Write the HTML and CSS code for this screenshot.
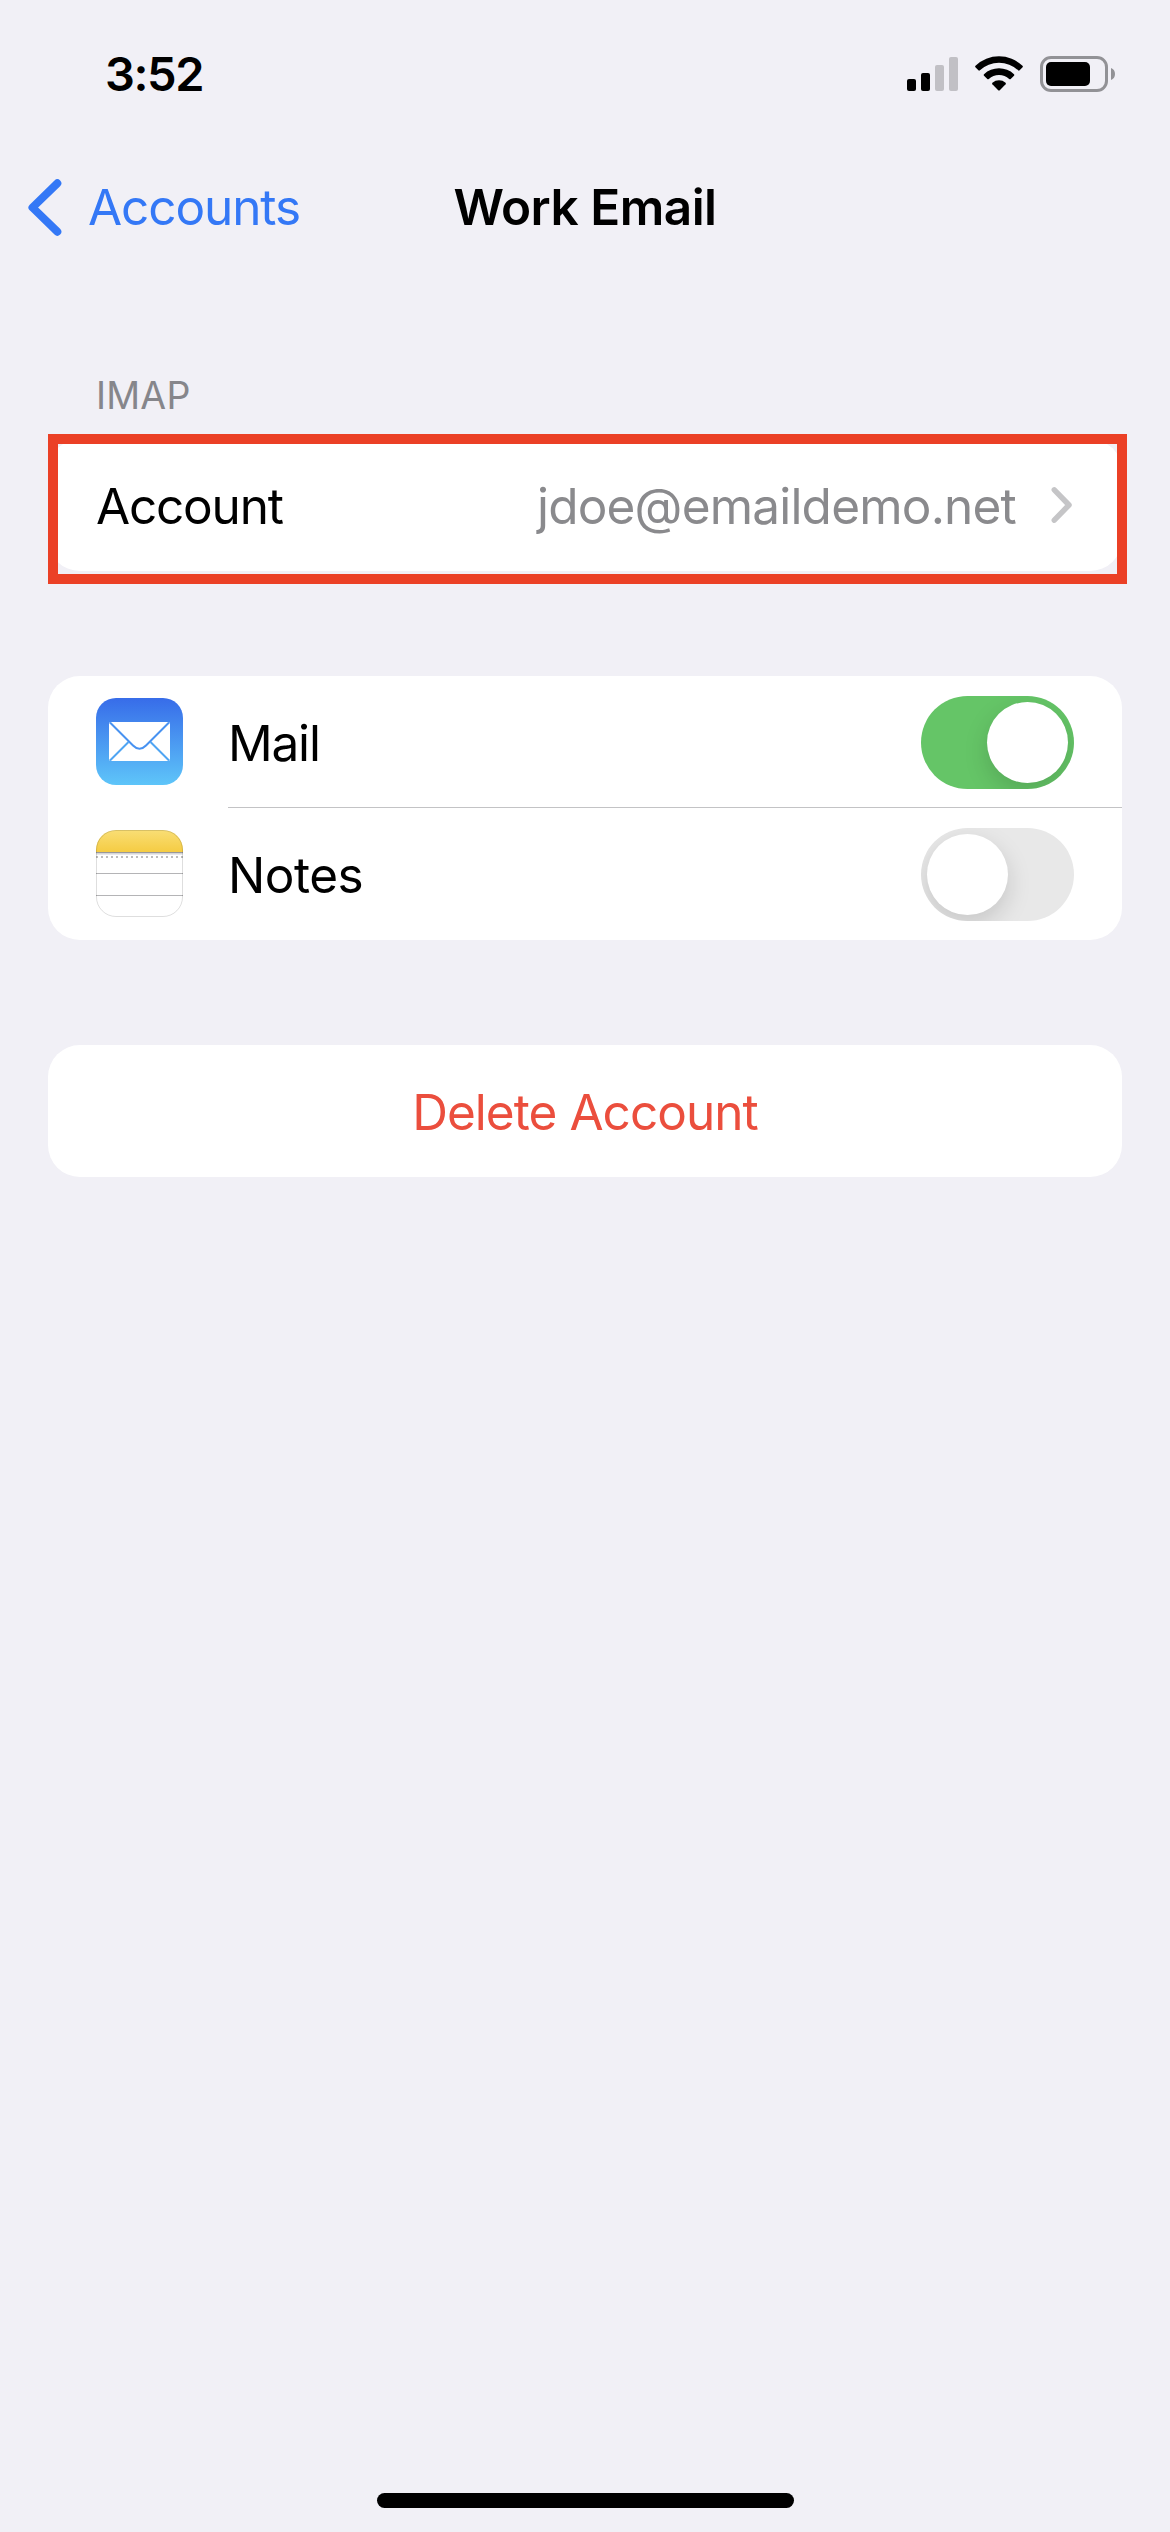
FILE: index.html
```html
<!DOCTYPE html>
<html lang="en">
<head>
<meta charset="utf-8">
<title>Work Email</title>
<link rel="stylesheet" href="styles.css">
</head>
<body>
<div class="screen">
  <header class="status">
    <span class="time">3:52</span>
    <div class="status-icons">
      <svg class="signal" width="51" height="36" viewBox="0 0 51 36">
        <rect x="0" y="23" width="9" height="12" rx="2"/>
        <rect x="14" y="17" width="9" height="18" rx="2"/>
        <rect x="28" y="9" width="9" height="26" rx="2" fill="#c1c0c5"/>
        <rect x="42" y="1" width="9" height="34" rx="2" fill="#c1c0c5"/>
      </svg>
      <svg class="wifi" width="48" height="36" viewBox="0 0 48 36">
        <path d="M0.5 10.8A34 34 0 0 1 47.500 10.800Q48.300 11.500 47.600 12.300L44.600 15.300Q43.900 16 43.100 15.300A28.200 28.200 0 0 0 4.900 15.300Q4.100 16 3.400 15.300L0.400 12.300Q-0.300 11.500 0.500 10.800Z"/>
        <path d="M9 19.200A22 22 0 0 1 39 19.200Q39.800 20 39 20.700L35.700 24Q35 24.600 34.200 24A15 15 0 0 0 13.800 24Q13 24.600 12.300 24L9 20.700Q8.200 20 9 19.200Z"/>
        <path d="M17.400 27.700A10.500 10.500 0 0 1 30.600 27.700Q31.300 28.400 30.600 29.200L24.800 35.200Q24 36 23.200 35.200L17.400 29.200Q16.700 28.400 17.400 27.700Z"/>
      </svg>
      <svg class="battery" width="75" height="36" viewBox="0 0 75 36">
        <rect x="1.500" y="1.500" width="65" height="33" rx="9.500" fill="none" stroke="#929296" stroke-width="3"/>
        <rect x="6" y="6" width="44" height="24" rx="5"/>
        <path d="M71 12C73.600 13 75 15.300 75 18S73.600 23 71 24Z" fill="#929296"/>
      </svg>
    </div>
  </header>

  <nav class="nav">
    <a class="back">
      <svg width="34" height="57" viewBox="0 0 34 57"><path d="M29.300 4.300L4.500 28.500L29.300 52.700" fill="none" stroke="#3478f6" stroke-width="8" stroke-linecap="round" stroke-linejoin="round"/></svg>
      <span class="back-label">Accounts</span>
    </a>
    <h1 class="title">Work Email</h1>
  </nav>

  <main class="content">
    <h2 class="section-label">IMAP</h2>
    <section class="card account-card">
      <div class="row">
        <span class="label account-label">Account</span>
        <span class="value">jdoe@emaildemo.net</span>
        <svg class="chevron" width="22" height="38" viewBox="0 0 22 38"><path d="M3.300 3.800L18 19L3.300 34.200" fill="none" stroke="#c5c5c7" stroke-width="5.500" stroke-linecap="round" stroke-linejoin="round"/></svg>
      </div>
      <div class="highlight"></div>
    </section>

    <section class="card services">
      <div class="row">
        <svg class="app-icon" width="87" height="87" viewBox="0 0 87 87">
          <defs><linearGradient id="sky" x2="0" y2="1"><stop offset="0" stop-color="#376ce9"/><stop offset="1" stop-color="#5ec5f9"/></linearGradient></defs>
          <rect width="87" height="87" rx="20" fill="url(#sky)"/>
          <rect x="13" y="24" width="61" height="39" rx="2" fill="#fff"/>
          <g fill="none" stroke-width="2"><path d="M14 24.500L37 47.500Q43.500 54 50 47.500L73 24.500" stroke="#4892f1"/><path d="M14 62.500L32.500 44M73 62.500L54.500 44" stroke="#4fa5f3"/></g>
        </svg>
        <span class="label mail-label">Mail</span>
        <span class="toggle on"><span class="knob"></span></span>
      </div>
      <div class="separator"></div>
      <div class="row">
        <svg class="app-icon" width="87" height="87" viewBox="0 0 87 87">
          <defs><linearGradient id="gold" x2="0" y2="1"><stop offset="0" stop-color="#f9de75"/><stop offset="1" stop-color="#f5cc43"/></linearGradient><clipPath id="tile"><rect width="87" height="87" rx="20"/></clipPath></defs>
          <g clip-path="url(#tile)">
            <rect width="87" height="87" fill="#fff"/>
            <rect width="87" height="22" fill="url(#gold)"/>
            <rect y="22" width="87" height="1.300" fill="#98989b"/>
            <rect y="23.300" width="87" height="1.200" fill="#d2d2d3"/>
            <path d="M0 27H87" stroke="#bdbdbd" stroke-width="2" stroke-dasharray="2 3"/>
            <path d="M0 43.500H87M0 65.500H87" stroke="#b4b4b6" stroke-width="1"/>
          </g>
          <rect x=".5" y=".5" width="86" height="86" rx="19.500" fill="none" stroke="#000" stroke-opacity=".13"/>
        </svg>
        <span class="label notes-label">Notes</span>
        <span class="toggle"><span class="knob"></span></span>
      </div>
    </section>

    <section class="card delete-card"><span class="delete">Delete Account</span></section>
  </main>

  <footer class="home"><div class="home-bar"></div></footer>
</div>
</body>
</html>
```
FILE: styles.css
```css
* { box-sizing: border-box; }

body {
  margin: 0;
  background: #f1f0f6;
  color: #000;
  font-family: Inter, "Liberation Sans", sans-serif;
  font-size: 49.5px;
  line-height: 60px;
}

svg { display: block; flex: none; }

.screen {
  width: 1170px;
  height: 2532px;
  display: flex;
  flex-direction: column;
}

.status {
  height: 141px;
  padding: 44px 55px 0 105px;
  display: flex;
  justify-content: space-between;
  align-items: flex-start;
}

.time { font-size: 47px; font-weight: 600; letter-spacing: -1.4px; }

.status-icons { display: flex; padding-top: 12px; }
.signal { margin-right: 17px; }
.wifi { margin: -1px 17px 0 0; }

.nav {
  height: 132px;
  padding: 0 28px;
  display: grid;
  grid-template-columns: 1fr auto 1fr;
  align-items: center;
}

.back { display: flex; align-items: center; gap: 26px; color: #3478f6; }
.back-label { letter-spacing: -1.1px; }
.title { margin: 0; font-size: 49.5px; font-weight: 600; letter-spacing: -0.5px; }

.content { flex: 1; padding: 93px 48px 0; }

.section-label {
  margin: 0;
  height: 73px;
  padding-left: 48px;
  color: #86868b;
  font-size: 37.5px;
  font-weight: 400;
  letter-spacing: 0.2px;
}

.card { background: #fff; border-radius: 32px; }

.account-card { position: relative; height: 132px; }

.row {
  height: 132px;
  padding: 0 48px;
  display: flex;
  align-items: center;
}

.label, .value, .delete { padding-top: 1px; }
.account-label { letter-spacing: -1.2px; }
.value { margin-left: auto; color: #8a8a8d; letter-spacing: -0.8px; }
.chevron { margin: 0 1px 0 35px; }

.highlight {
  position: absolute;
  left: 0;
  top: -5px;
  width: 1079px;
  height: 150px;
  border: 10px solid #eb4026;
}

.services { margin-top: 105px; height: 264px; }
.services .label { margin-left: 45px; }
.services .mail-label { letter-spacing: -1.2px; }
.services .notes-label { letter-spacing: -0.5px; }
.app-icon { margin-bottom: 1px; }

.separator { height: 1px; margin: -1px 0 0 180px; background: #c3c3c5; }

.toggle {
  width: 153px;
  height: 93px;
  margin-left: auto;
  padding: 6px;
  border-radius: 47px;
  background: #e8e8e8;
  display: flex;
  overflow: hidden;
}
.toggle.on { background: #65c567; justify-content: flex-end; }

.knob {
  width: 81px;
  height: 81px;
  border-radius: 50%;
  background: #fff;
  box-shadow: 0 9px 24px rgba(0, 0, 0, .15);
}

.delete-card {
  height: 132px;
  margin-top: 105px;
  display: flex;
  align-items: center;
  justify-content: center;
}
.delete { color: #eb4e3d; letter-spacing: -0.95px; }

.home { height: 39px; display: flex; justify-content: center; }
.home-bar { width: 417px; height: 15px; border-radius: 8px; background: #000; }
```
